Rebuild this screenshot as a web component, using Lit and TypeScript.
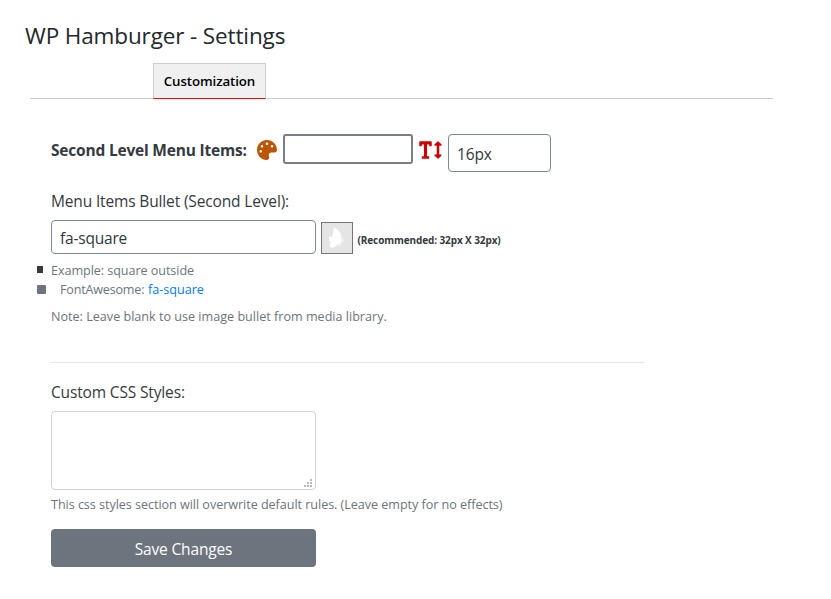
import { LitElement, html, css, svg } from "lit";
import { customElement } from "lit/decorators.js";

const paletteIcon = svg`<path d="M204.3 5C104.9 24.4 24.8 104.3 5.2 203.4c-37 187 131.7 326.4 258.8 306.7 41.2-6.4 61.4-54.6 42.5-91.7-23.1-45.4 9.9-98.4 60.9-98.4h79.7c35.8 0 64.8-29.6 64.9-65.3C511.5 97.1 368.1-26.9 204.3 5zM96 320c-17.7 0-32-14.3-32-32s14.3-32 32-32 32 14.3 32 32-14.3 32-32 32zm32-128c-17.7 0-32-14.3-32-32s14.3-32 32-32 32 14.3 32 32-14.3 32-32 32zm128-64c-17.7 0-32-14.3-32-32s14.3-32 32-32 32 14.3 32 32-14.3 32-32 32zm128 64c-17.7 0-32-14.3-32-32s14.3-32 32-32 32 14.3 32 32-14.3 32-32 32z"/>`;
const textHeightIcon = svg`<path d="M304 32H16A16 16 0 0 0 0 48v96a16 16 0 0 0 16 16h32a16 16 0 0 0 16-16v-32h56v304H80a16 16 0 0 0-16 16v32a16 16 0 0 0 16 16h160a16 16 0 0 0 16-16v-32a16 16 0 0 0-16-16h-40V112h56v32a16 16 0 0 0 16 16h32a16 16 0 0 0 16-16V48a16 16 0 0 0-16-16zm256 336h-48V144h48c14.31 0 21.33-17.31 11.31-27.31l-80-80a16 16 0 0 0-22.62 0l-80 80C379.36 126 384.36 144 400 144h48v224h-48c-14.31 0-21.32 17.31-11.31 27.31l80 80a16 16 0 0 0 22.62 0l80-80C580.64 386 575.64 368 560 368z"/>`;

@customElement("app-root")
export class AppRoot extends LitElement {
  static styles = css`
    :host {
      display: block;
      height: 599px;
      overflow: hidden;
      background: #fff;
      color: #343a40;
      font: 400 15.5px/24px "Open Sans", sans-serif;
      white-space: nowrap;
    }
    * { box-sizing: border-box; }
    h1, p, ul { margin: 0; padding: 0; }
    svg { display: block; }
    h1 {
      padding: 22px 0 0 25px;
      height: 63px;
      font-size: 22.5px;
      font-weight: 400;
      line-height: 27px;
      letter-spacing: -0.13px;
      color: #23282d;
    }
    .tabs {
      display: flex;
      width: 743px;
      height: 36px;
      margin-left: 30px;
      padding-left: 123px;
      border-bottom: 1px solid #ccc;
    }
    .tab {
      width: 113px;
      height: 36px;
      border: 1px solid #ccc;
      border-bottom-color: #f00;
      background: #f0f0f0;
      color: #000;
      font-size: 13.3px;
      font-weight: 600;
      line-height: 34px;
      letter-spacing: -0.1px;
      text-align: center;
    }
    form { padding: 35px 0 0 51px; }
    .row { display: flex; align-items: flex-start; }
    .heading {
      width: 206px;
      padding-top: 4px;
      font-weight: 700;
      letter-spacing: -0.2px;
    }
    .icon { margin-top: 6px; }
    .palette { fill: #bb5500; margin-right: 6px; }
    .size { fill: #c00; margin: 6px 6px 0 6px; }
    input, textarea {
      display: block;
      margin: 0;
      background: #fff;
      color: #32373c;
      font: inherit;
      outline: none;
      border: 1px solid #7e8993;
      border-radius: 4px;
    }
    .color {
      width: 130px;
      height: 30px;
      border: 2px solid #7a7f85;
      border-radius: 3px;
    }
    .px { width: 103px; height: 38px; padding: 1px 8px 0; letter-spacing: -0.15px; }
    .label { display: block; letter-spacing: -0.15px; }
    .first { margin-top: 17px; }
    .bullet-row { margin-top: 7px; }
    .bullet {
      width: 265px;
      height: 34px;
      padding: 1px 8px 0;
      letter-spacing: -0.2px;
    }
    .thumb {
      width: 32px;
      height: 32px;
      margin: 2px 5px 0 5px;
      background: #e5e5e5;
      border: 1px solid #767676;
    }
    .thumb svg { fill: #fff; stroke: #fff; stroke-linecap: round; }
    .hint {
      padding-top: 8px;
      margin-left: -0.5px;
      font-size: 10px;
      font-weight: 700;
      letter-spacing: -0.1px;
    }
    .muted { color: #6c757d; font-size: 12.6px; line-height: 19px; }
    ul { list-style: none; margin: 7px 0 0 -14px; }
    li { display: flex; align-items: center; letter-spacing: -0.06px; }
    .dot { width: 6px; height: 7px; margin-right: 8px; background: #343a40; position: relative; top: -1px; }
    .fa { width: 9px; height: 9px; margin-right: 14px; border-radius: 1px; background: #6c757d; }
    .name { width: 88px; letter-spacing: -0.2px; }
    a { color: #007bff; text-decoration: none; letter-spacing: 0; }
    .note { margin-top: 8px; }
    .rule { width: 593px; height: 1px; margin-top: 36px; background: #e5e5e5; }
    .second { margin-top: 17px; }
    .area { position: relative; width: 265px; margin-top: 7px; }
    textarea {
      width: 265px;
      height: 79px;
      border-color: #ced4da;
      resize: none;
    }
    .grip { position: absolute; right: 4px; bottom: 3px; fill: #b8b8b8; }
    .help { margin-top: 5px; letter-spacing: -0.045px; }
    button {
      display: block;
      width: 265px;
      height: 38px;
      margin-top: 15px;
      padding: 1px 0 0;
      border: 0;
      border-radius: 4px;
      background: #6c757d;
      color: #fff;
      font: inherit;
      letter-spacing: -0.15px;
    }
  `;

  render() {
    return html`
      <h1>WP Hamburger - Settings</h1>
      <div class="tabs"><div class="tab">Customization</div></div>
      <form>
        <div class="row">
          <div class="heading">Second Level Menu Items:</div>
          <svg class="icon palette" width="20" height="20" viewBox="0 0 512 512">${paletteIcon}</svg>
          <input class="color" />
          <svg class="icon size" width="23" height="20" viewBox="0 0 576 512">${textHeightIcon}</svg>
          <input class="px" value="16px" />
        </div>
        <label class="label first">Menu Items Bullet (Second Level):</label>
        <div class="row bullet-row">
          <input class="bullet" value="fa-square" />
          <div class="thumb">
            <svg width="30" height="30" viewBox="0 0 30 30">
              <path stroke="none" d="M11.6 4.8C14.6 5.4 18 8.4 19.2 12C19.8 14.4 19.6 16.8 18.6 18.6C17 21.4 14.4 23 11.6 24.3C10 25 8.5 24.8 7.9 23.6C7.2 22 8.2 20.6 8.6 19.4C7.2 18.2 6.8 15.8 7 13.8C8 13.6 9 13.8 10 14.2C10.4 11 12.4 8.4 11.6 4.8Z"/>
              <path fill="none" stroke-width="1.1" d="M17.2 22.6L19.4 18.4"/>
              <path fill="none" stroke-width=".7" d="M19.3 18.4L22 17.4M19.3 18.4L21.2 15.4"/>
            </svg>
          </div>
          <span class="hint">(Recommended: 32px X 32px)</span>
        </div>
        <ul class="muted">
          <li><i class="dot"></i>Example: square outside</li>
          <li><i class="fa"></i><span class="name">FontAwesome:</span><a href="#">fa-square</a></li>
        </ul>
        <p class="muted note">Note: Leave blank to use image bullet from media library.</p>
        <div class="rule"></div>
        <label class="label second">Custom CSS Styles:</label>
        <div class="area">
          <textarea></textarea>
          <svg class="grip" width="8" height="8" viewBox="0 0 8 8" shape-rendering="crispEdges">
            <path d="M0 6h2v2H0zM3 6h2v2H3zM6 6h2v2H6zM3 3h2v2H3zM6 3h2v2H6zM6 0h2v2H6z"/>
          </svg>
        </div>
        <p class="muted help">This css styles section will overwrite default rules. (Leave empty for no effects)</p>
        <button type="button">Save Changes</button>
      </form>
    `;
  }
}
